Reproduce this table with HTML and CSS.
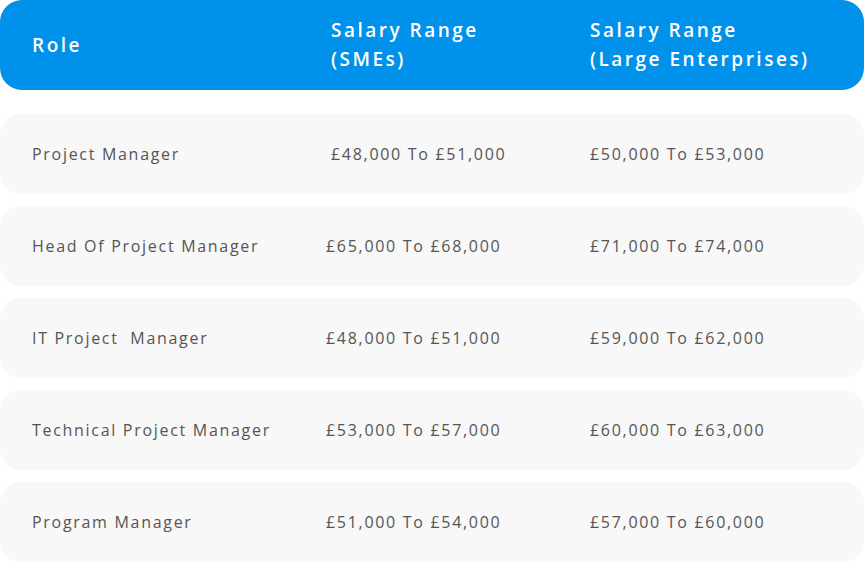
FILE: index.html
```html
<!DOCTYPE html>
<html>
<head>
<meta charset="utf-8">
<link rel="stylesheet" href="styles.css">
</head>
<body>
<div class="table">
  <div class="head">
    <div class="h-role">Role</div>
    <div class="h-sme">Salary Range<br>(SMEs)</div>
    <div class="h-large">Salary Range<br>(Large Enterprises)</div>
  </div>
  <div class="row">
    <div>Project Manager</div>
    <div class="c2 shift">£48,000 To £51,000</div>
    <div>£50,000 To £53,000</div>
  </div>
  <div class="row">
    <div>Head Of Project Manager</div>
    <div class="c2">£65,000 To £68,000</div>
    <div>£71,000 To £74,000</div>
  </div>
  <div class="row">
    <div>IT Project&nbsp; Manager</div>
    <div class="c2">£48,000 To £51,000</div>
    <div>£59,000 To £62,000</div>
  </div>
  <div class="row">
    <div>Technical Project Manager</div>
    <div class="c2">£53,000 To £57,000</div>
    <div>£60,000 To £63,000</div>
  </div>
  <div class="row">
    <div>Program Manager</div>
    <div class="c2">£51,000 To £54,000</div>
    <div>£57,000 To £60,000</div>
  </div>
</div>
</body>
</html>
```
FILE: styles.css
```css
html, body {
  margin: 0;
  padding: 0;
  background: #ffffff;
}
.table {
  width: 864px;
  display: flex;
  flex-direction: column;
  gap: 12px;
  font-family: "Open Sans", "Liberation Sans", sans-serif;
}
.head {
  height: 90px;
  box-sizing: border-box;
  background: #0091ea;
  border-radius: 22px;
  display: grid;
  grid-template-columns: 299px 259px 1fr;
  align-items: center;
  padding-left: 32px;
  color: #ffffff;
  font-weight: 600;
  font-size: 19px;
  letter-spacing: 2.5px;
  line-height: 29px;
  margin-bottom: 12px;
}
.row {
  height: 80px;
  box-sizing: border-box;
  background: #f8f8f8;
  border-radius: 20px;
  display: grid;
  grid-template-columns: 294px 264px 1fr;
  align-items: center;
  padding-left: 32px;
  color: #555555;
  font-size: 16px;
  letter-spacing: 1.7px;
}
.shift {
  padding-left: 5px;
}
```
